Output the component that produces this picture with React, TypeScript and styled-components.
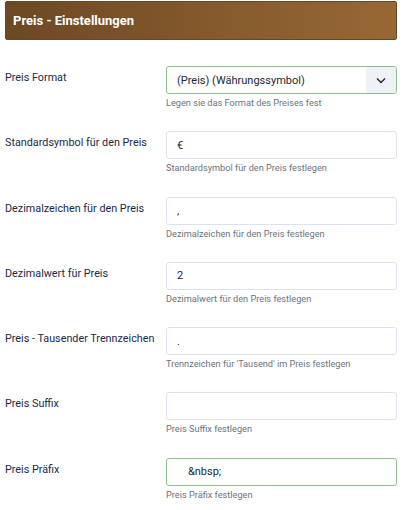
import styled, { createGlobalStyle } from "styled-components";

const GlobalStyle = createGlobalStyle`
  body {
    margin: 0;
    background: #ffffff;
    font-family: Roboto, "Liberation Sans", Arial, sans-serif;
  }
`;

const Panel = styled.div`
  width: 404px;
  padding: 1px 7px 0 5px;
  box-sizing: border-box;
`;

const Header = styled.div`
  height: 39px;
  display: flex;
  align-items: center;
  padding-left: 7px;
  box-sizing: border-box;
  background: linear-gradient(90deg, #6c4824 0%, #83592c 50%, #976834 100%);
  border: 1px solid #6a4622;
  border-radius: 2px;
  color: #ffffff;
  font-size: 13px;
  font-weight: 700;
  margin-bottom: 26px;
`;

const Row = styled.div`
  display: grid;
  grid-template-columns: 161px 1fr;
  margin-bottom: 22.3px;
`;

const Label = styled.label`
  padding-top: 4px;
  font-size: 10.8px;
  line-height: 16px;
  color: #1b2945;
`;

const Field = styled.div`
  display: flex;
  flex-direction: column;
`;

const Box = styled.div<{ $active?: boolean }>`
  height: 28px;
  box-sizing: border-box;
  display: flex;
  align-items: stretch;
  border: 1px solid ${(p) => (p.$active ? "#8dc08d" : "#dde3ec")};
  border-radius: 3px;
  background: #ffffff;
  overflow: hidden;
`;

const Input = styled.input`
  flex: 1;
  min-width: 0;
  border: none;
  outline: none;
  padding: 0 10px;
  font-family: inherit;
  font-size: 11px;
  color: #222831;
  background: transparent;
  white-space: pre;
`;

const SelectValue = styled.div`
  flex: 1;
  display: flex;
  align-items: center;
  padding-left: 10px;
  font-size: 11px;
  color: #222831;
`;

const Chevron = styled.div`
  width: 30px;
  display: flex;
  align-items: center;
  justify-content: center;
  background: #eef1f5;
`;

const Help = styled.div`
  margin-top: 3px;
  font-size: 9.2px;
  line-height: 12px;
  color: #6b737d;
`;

const fields = [
  { label: "Standardsymbol für den Preis", value: "€", help: "Standardsymbol für den Preis festlegen" },
  { label: "Dezimalzeichen für den Preis", value: ",", help: "Dezimalzeichen für den Preis festlegen" },
  { label: "Dezimalwert für Preis", value: "2", help: "Dezimalwert für den Preis festlegen" },
  { label: "Preis - Tausender Trennzeichen", value: ".", help: "Trennzeichen für 'Tausend' im Preis festlegen" },
  { label: "Preis Suffix", value: "", help: "Preis Suffix festlegen" },
  { label: "Preis Präfix", value: "    &nbsp;", help: "Preis Präfix festlegen", active: true },
];

const App = () => {
  return (
    <>
      <GlobalStyle />
      <Panel>
        <Header>Preis - Einstellungen</Header>
        <Row>
          <Label>Preis Format</Label>
          <Field>
            <Box $active>
              <SelectValue>(Preis) (Währungssymbol)</SelectValue>
              <Chevron>
                <svg width="10" height="7" viewBox="0 0 10 7">
                  <path d="M1 1.5 L5 5.5 L9 1.5" fill="none" stroke="#222831" strokeWidth="1.4" />
                </svg>
              </Chevron>
            </Box>
            <Help>Legen sie das Format des Preises fest</Help>
          </Field>
        </Row>
        {fields.map((f) => (
          <Row key={f.label}>
            <Label>{f.label}</Label>
            <Field>
              <Box $active={f.active}>
                <Input defaultValue={f.value} />
              </Box>
              <Help>{f.help}</Help>
            </Field>
          </Row>
        ))}
      </Panel>
    </>
  );
};

export default App;
